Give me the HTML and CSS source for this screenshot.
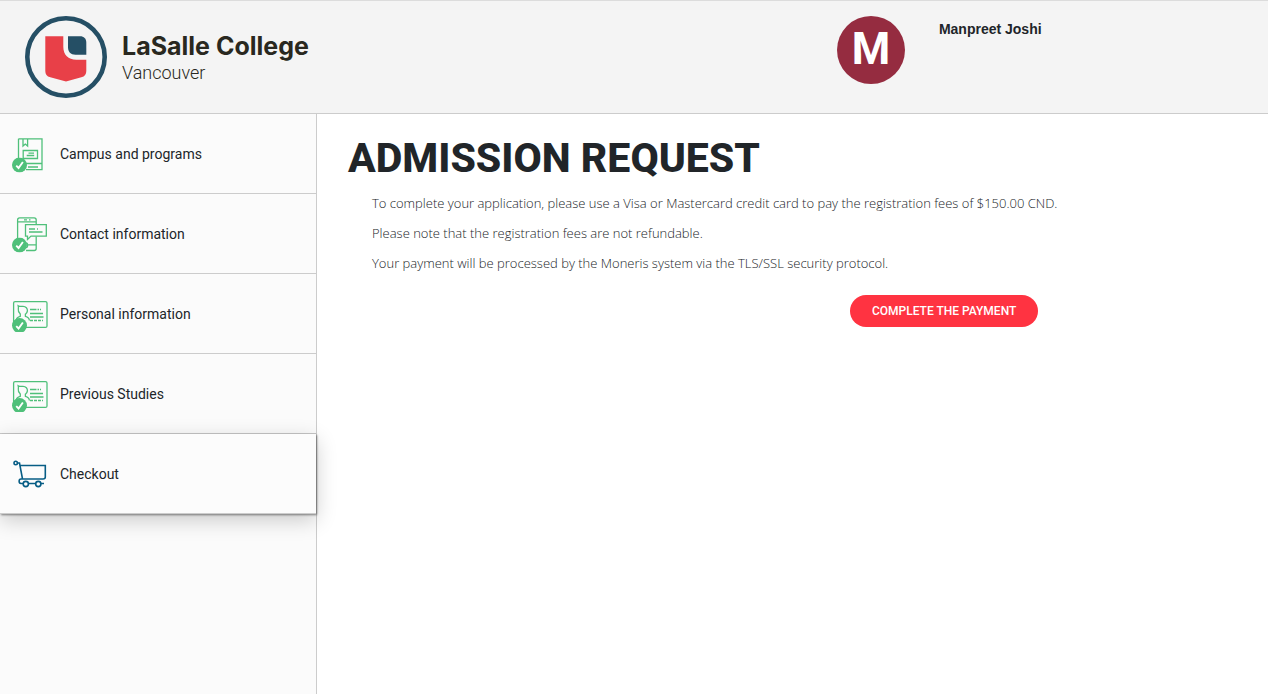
FILE: index.html
```html
<!DOCTYPE html>
<html lang="en">
<head>
  <meta charset="utf-8">
  <meta name="viewport" content="width=device-width, initial-scale=1.0">
  <title>Admission Request - LaSalle College Vancouver</title>
  <link rel="stylesheet" href="styles.css">
</head>
<body>
  <!-- shared icons -->
  <svg class="sprite" aria-hidden="true">
    <symbol id="icon-check" viewBox="0 0 16 16">
      <circle cx="8" cy="8" r="8" fill="#4fc07a" stroke="none"/>
      <path d="M4.5 8.6l2.5 2.6 4.6-6.4" fill="none" stroke="#fff" stroke-width="2"/>
    </symbol>
    <symbol id="icon-card" viewBox="0 0 36 36">
      <rect x="1.6" y="5.6" width="33.4" height="25.8" rx="1.5"/>
      <path d="M4 24.5c.3-3 2.200-3.600 4.300-4.200V18C6.500 16.500 6 15 6.300 13.200c.2-1.200.2-2.200-.1-3.400 1.800.9 3 .6 4.800.6 3 0 4.600 2 4.400 4.500-.1 1.400-.9 2.500-2 3.300v2.100c2.200.6 3.800 1.400 4 4.200"/>
      <path d="M18 13.500h6.500M25.500 13.500h1.500M28 13.500h1M18 17.500h13M18 21h13.5"/>
      <path d="M18 24.500h13" stroke-dasharray="3 1"/>
      <use href="#icon-check" x="0" y="22" width="15" height="15"/>
    </symbol>
  </svg>

  <header class="header">
    <a class="logo" href="#">
      <svg class="logo-mark" viewBox="0 0 82 82" aria-hidden="true">
        <circle cx="41" cy="41" r="38.7" fill="none" stroke="#254f65" stroke-width="4.6"/>
        <path d="M20.3 20.300h18v10.500c0 8 5 13 13 13h10V55c0 3.500-1.500 5.300-5 6.300L41 65.500l-15.700-4.200c-3.500-1-5-2.800-5-6.300z" fill="#e84048"/>
        <path d="M43 20.300h12c4 0 6.300 2.300 6.300 6.300v12.200H50.500c-5 0-7.500-3-7.500-7.500z" fill="#254f65"/>
      </svg>
      <span class="logo-text">
        <strong class="logo-name">LaSalle College</strong>
        <span class="logo-city">Vancouver</span>
      </span>
    </a>
    <div class="user">
      <div class="avatar">M</div>
      <span class="user-name">Manpreet Joshi</span>
    </div>
  </header>

  <div class="page">
    <nav class="sidebar">
      <a class="step" href="#">
        <svg class="step-icon" viewBox="0 0 36 36" aria-hidden="true">
          <path d="M6.500 2.800h23.500v30.800H14M6.500 2.800v25.500c0-.6 1-1 2-1M12 27.500h18M16 31h10M11 3v7l2.300-2 2.300 2V3"/>
          <path d="M11.200 14.500h14.300v8H11.200zM16.500 17.200h5.500M14.700 19.500h7.500"/>
          <use href="#icon-check" x="0" y="21.500" width="15" height="15"/>
        </svg>
        <span>Campus and programs</span>
      </a>
      <a class="step" href="#">
        <svg class="step-icon" viewBox="0 0 36 36" aria-hidden="true">
          <path d="M5.600 25V4c0-1.500.6-2.200 2-2.200h14.600c1.400 0 2 .7 2 2.200v4.500M24.200 20.500v12c0 1.400-.6 2-2 2H14M5.600 5.800h18.600M12 3.800h3M17 3.800h1.500M15 28.800h9.200M14 27c2.200 0 2.200 4.500 0 4.500"/>
          <path d="M13.500 8.700h20.800v11.400H19l-3.500 3.400v-3.400h-2zM17 13h6M17 16h13.500M25 13h1"/>
          <use href="#icon-check" x="0" y="21.500" width="15" height="15"/>
        </svg>
        <span>Contact information</span>
      </a>
      <a class="step" href="#">
        <svg class="step-icon" aria-hidden="true"><use href="#icon-card"/></svg>
        <span>Personal information</span>
      </a>
      <a class="step" href="#">
        <svg class="step-icon" aria-hidden="true"><use href="#icon-card"/></svg>
        <span>Previous Studies</span>
      </a>
      <a class="step active" href="#" aria-current="step">
        <svg class="step-icon" viewBox="0 0 36 36" aria-hidden="true">
          <circle cx="3.700" cy="7" r="1.700"/>
          <path d="M5.500 7h2l3 16H31c1.500 0 2.300-.6 2.300-2V9.500H8M10.500 23H9c-2.500 0-2.500 4.500 0 4.500h2.300M16.500 27.500h7.300M29 27.500h3"/>
          <circle cx="13.800" cy="28" r="2.600"/>
          <circle cx="26.300" cy="28" r="2.600"/>
        </svg>
        <span>Checkout</span>
      </a>
    </nav>

    <main class="content">
      <h1>Admission Request</h1>
      <div class="details">
        <p>To complete your application, please use a Visa or Mastercard credit card to pay the registration fees of $150.00 CND.</p>
        <p>Please note that the registration fees are not refundable.</p>
        <p>Your payment will be processed by the Moneris system via the TLS/SSL security protocol.</p>
      </div>
      <div class="actions">
        <button type="button" class="btn-primary">Complete the payment</button>
      </div>
    </main>
  </div>
</body>
</html>
```

FILE: styles.css
```css
* {
  margin: 0;
  padding: 0;
  box-sizing: border-box;
}

body {
  min-height: 100vh;
  display: flex;
  flex-direction: column;
  font-family: Roboto, Arial, sans-serif;
  font-size: 14px;
  color: #212529;
  background: #fff;
}

a {
  color: inherit;
  text-decoration: none;
}

.sprite {
  position: absolute;
  width: 0;
  height: 0;
}

/* header */
.header {
  display: flex;
  justify-content: space-between;
  padding: 15px 0;
  background: #f4f4f4;
  border-top: 1px solid #dcdcdc;
  border-bottom: 1px solid #ccc;
}

.logo {
  display: flex;
  align-items: center;
  gap: 15px;
  padding-left: 25px;
}

.logo-mark {
  width: 82px;
  height: 82px;
}

.logo-text {
  display: flex;
  flex-direction: column;
  padding-top: 2px;
  color: #292820;
}

.logo-name {
  font-family: Inter, sans-serif;
  font-size: 25px;
  line-height: 30px;
  font-weight: 700;
}

.logo-city {
  font-size: 18px;
  line-height: 24px;
  font-weight: 300;
}

.user {
  width: 34%;
  display: flex;
  align-items: flex-start;
  gap: 34px;
}

.avatar {
  width: 68px;
  height: 68px;
  border-radius: 50%;
  background: #952c40;
  color: #fff;
  font-size: 44px;
  line-height: 66px;
  font-weight: 700;
  text-align: center;
}

.user-name {
  padding-top: 3px;
  font-family: "Liberation Sans", Arial, sans-serif;
  font-size: 14px;
  line-height: 20px;
  font-weight: 700;
}

/* page */
.page {
  flex: 1;
  display: flex;
}

.sidebar {
  width: 25%;
  background: #fbfbfb;
  border-right: 1px solid #ccc;
}

.step {
  display: flex;
  align-items: center;
  gap: 12px;
  height: 80px;
  padding: 0 12px;
  border-bottom: 1px solid #ccc;
}

.step-icon {
  width: 36px;
  height: 36px;
  fill: none;
  stroke: #4fc07a;
  stroke-width: 1.3;
  overflow: visible;
}

.step.active {
  background: #fcfcfc;
  box-shadow: 1px 1px 2px rgba(0,0,0,0.45), 0 6px 20px rgba(0,0,0,0.2);
}

.step.active .step-icon {
  stroke: #075d85;
  stroke-width: 1.6;
}

.content {
  flex: 1;
  padding: 20px 35px 20px 31px;
}

h1 {
  font-size: 41px;
  line-height: 48px;
  font-weight: 800;
  text-transform: uppercase;
}

.details {
  padding: 11px 0 0 24px;
}

.details p {
  margin-bottom: 10px;
  font-family: "Open Sans", sans-serif;
  font-size: 13px;
  line-height: 20px;
  font-weight: 300;
}

.actions {
  width: 78%;
  padding-top: 12px;
  text-align: right;
}

.btn-primary {
  height: 32px;
  padding: 0 22px;
  border: none;
  border-radius: 16px;
  background: #ff3341;
  color: #fff;
  font-family: inherit;
  font-size: 12px;
  font-weight: 500;
  text-transform: uppercase;
  cursor: pointer;
}

.btn-primary:hover {
  background: #e52a37;
}
```
